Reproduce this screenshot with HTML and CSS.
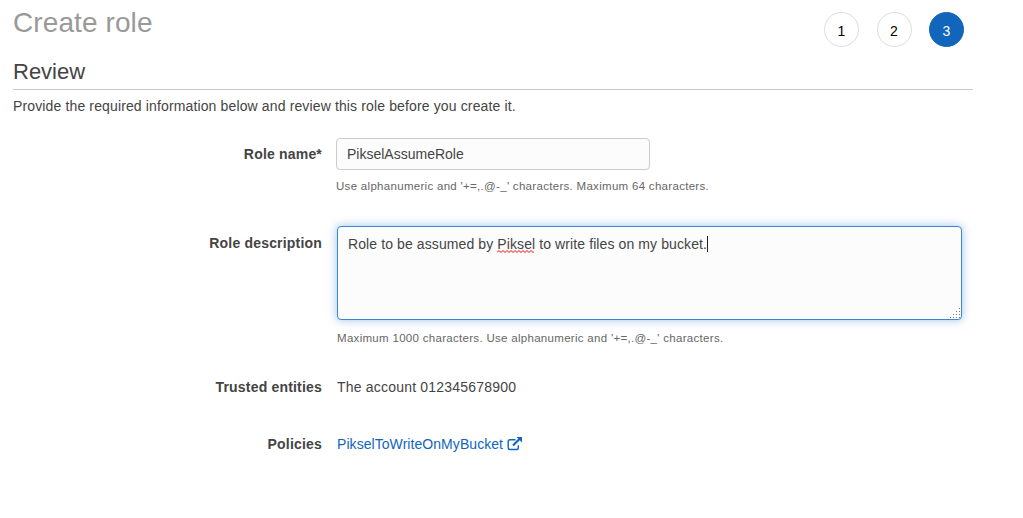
FILE: index.html
```html
<!DOCTYPE html>
<html lang="en">
<head>
<meta charset="utf-8">
<title>Create role</title>
<link rel="stylesheet" href="styles.css">
</head>
<body>
<main class="page">
  <header class="header">
    <h1 class="title">Create role</h1>
    <ol class="steps">
      <li class="step">1</li>
      <li class="step">2</li>
      <li class="step step-active">3</li>
    </ol>
  </header>
  <h2 class="section-title">Review</h2>
  <p class="intro">Provide the required information below and review this role before you create it.</p>
  <div class="row row-name">
    <label class="label">Role name*</label>
    <div class="field">
      <div class="input">PikselAssumeRole</div>
      <p class="hint">Use alphanumeric and '+=,.@-_' characters. Maximum 64 characters.</p>
    </div>
  </div>
  <div class="row row-description">
    <label class="label">Role description</label>
    <div class="field">
      <div class="textarea">Role to be assumed by <span class="misspelled">Piksel<svg class="squiggle" width="37" height="3" viewBox="0 0 37 3"><path d="M0 2.5L2 .5L4 2.5L6 .5L8 2.5L10 .5L12 2.5L14 .5L16 2.5L18 .5L20 2.5L22 .5L24 2.5L26 .5L28 2.5L30 .5L32 2.5L34 .5L36 2.5L37 1.5"/></svg></span> to write files on my bucket.<span class="caret"></span>
        <svg class="grip" width="10" height="10" viewBox="0 0 10 10"><path d="M9 0h1v1h-1zM6 3h1v1h-1zM9 3h1v1h-1zM3 6h1v1h-1zM6 6h1v1h-1zM9 6h1v1h-1zM0 9h1v1h-1zM3 9h1v1h-1zM6 9h1v1h-1zM9 9h1v1h-1z"/></svg>
      </div>
      <p class="hint">Maximum 1000 characters. Use alphanumeric and '+=,.@-_' characters.</p>
    </div>
  </div>
  <div class="row row-trusted">
    <span class="label">Trusted entities</span>
    <div class="field">The account 012345678900</div>
  </div>
  <div class="row row-policies">
    <span class="label">Policies</span>
    <div class="field"><a class="link">PikselToWriteOnMyBucket<svg class="external" width="16" height="14" viewBox="0 0 16 14"><path class="box" d="M8.5 2.7H3Q1.2 2.7 1.2 4.5V10.700Q1.200 12.500 3 12.500H9.500Q11.300 12.500 11.300 10.700V8.300"/><path class="shaft" d="M6 8.500L12.500 2"/><path class="head" d="M9.500 0H15V5.500Z"/></svg></a></div>
  </div>
</main>
</body>
</html>
```
FILE: styles.css
```css
* {
  box-sizing: border-box;
}

body {
  margin: 0;
  background: #fff;
  color: #444;
  font: 14px/20px "Liberation Sans", Arial, sans-serif;
}

h1, h2, p, ol {
  margin: 0;
  padding: 0;
  font-weight: normal;
}

.page {
  width: 973px;
  padding-left: 13px;
}

.header {
  display: flex;
  justify-content: space-between;
  height: 56px;
  padding-right: 9px;
}

.title {
  padding-top: 7px;
  color: #999;
  font-size: 28px;
  letter-spacing: .1px;
  line-height: 32px;
}

.steps {
  display: flex;
  gap: 17.5px;
  padding-top: 12px;
  list-style: none;
}

.step {
  width: 35px;
  height: 35px;
  border: 1px solid #ddd;
  border-radius: 50%;
  color: #000;
  line-height: 36px;
  text-align: center;
}

.step-active {
  border-color: #1166bb;
  background: #1166bb;
  color: #fff;
}

.section-title {
  height: 34px;
  border-bottom: 1px solid #ccc;
  font-size: 22px;
  line-height: 32px;
}

.intro {
  padding-top: 6px;
  letter-spacing: .135px;
}

.row {
  display: grid;
  grid-template-columns: 309px 1fr;
  column-gap: 15px;
}

.label {
  font-weight: bold;
  letter-spacing: .19px;
  text-align: right;
}

.row-name {
  column-gap: 14px;
  margin-top: 22px;
}

.row-name .label {
  padding-top: 6px;
}

.input {
  width: 314px;
  height: 32px;
  padding: 5px 10px;
  border: 1px solid #ccc;
  border-radius: 4px;
  background: #fcfcfc;
}

.hint {
  margin-top: 8px;
  color: #666;
  font-size: 11.5px;
  letter-spacing: .3px;
  line-height: 16px;
}

.row-description {
  margin-top: 32px;
}

.row-description .label {
  padding-top: 7px;
}

.textarea {
  position: relative;
  width: 625px;
  height: 94px;
  padding: 7px 10px;
  border: 1px solid #3b86d2;
  border-radius: 4px;
  background: #fcfcfc;
  box-shadow: 0 0 10px rgba(59, 134, 210, .5);
  letter-spacing: .1px;
}

.row-description .hint {
  margin-top: 10px;
}

.misspelled {
  position: relative;
}

.squiggle {
  position: absolute;
  left: 0;
  top: 14px;
  fill: none;
  stroke: #f00;
}

.caret {
  display: inline-block;
  width: 1px;
  height: 16px;
  background: #222;
  vertical-align: -3px;
}

.grip {
  position: absolute;
  right: 1px;
  bottom: 1px;
  fill: #777;
}

.row-trusted {
  margin-top: 31px;
}

.row-trusted .field {
  letter-spacing: .2px;
}

.row-policies {
  margin-top: 37px;
}

.link {
  color: #1166bb;
  letter-spacing: .06px;
}

.external {
  margin-left: 4px;
  vertical-align: -2px;
  fill: none;
  stroke: #1166bb;
  stroke-width: 1.4;
}

.external .shaft {
  stroke-width: 2.2;
}

.external .head {
  fill: #1166bb;
  stroke: none;
}
```
